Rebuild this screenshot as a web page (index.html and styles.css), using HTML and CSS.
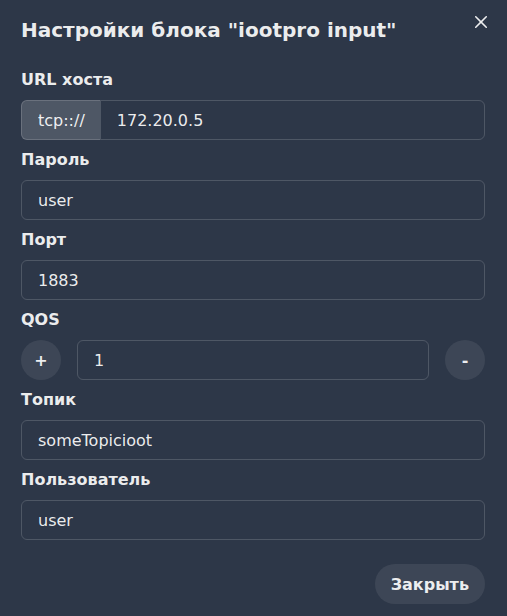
FILE: index.html
```html
<!DOCTYPE html>
<html lang="ru">

<head>
    <meta charset="UTF-8">
    <meta name="viewport" content="width=device-width, initial-scale=1.0">
    <title>Настройки блока</title>
    <link rel="stylesheet" href="styles.css">
</head>

<body>
    <section class="modal">
        <header class="modal-header">Настройки блока "iootpro input"</header>
        <button class="close" type="button" aria-label="Close">
            <svg viewBox="0 0 24 24" width="12" height="12">
                <path fill="currentColor" d="M.44 21.44a1.49 1.49 0 0 0 0 2.12 1.5 1.5 0 0 0 2.12 0l9.26-9.26a.25.25 0 0 1 .36 0l9.26 9.26a1.5 1.5 0 0 0 2.12 0 1.49 1.49 0 0 0 0-2.12l-9.26-9.26a.25.25 0 0 1 0-.36l9.26-9.26A1.5 1.5 0 0 0 21.44.44l-9.26 9.26a.25.25 0 0 1-.36 0L2.56.44A1.5 1.5 0 0 0 .44 2.56l9.26 9.26a.25.25 0 0 1 0 .36z"/>
            </svg>
        </button>

        <div class="modal-body">
            <div class="group">
                <label>URL хоста</label>
                <div class="input-group">
                    <span class="addon">tcp:://</span>
                    <input type="text" value="172.20.0.5">
                </div>
            </div>
            <div class="group">
                <label>Пароль</label>
                <input type="text" value="user">
            </div>
            <div class="group">
                <label>Порт</label>
                <input type="text" value="1883">
            </div>
            <div class="group">
                <label>QOS</label>
                <div class="stepper">
                    <button type="button" class="round">+</button>
                    <input type="text" value="1">
                    <button type="button" class="round">-</button>
                </div>
            </div>
            <div class="group">
                <label>Топик</label>
                <input type="text" value="someTopicioot">
            </div>
            <div class="group">
                <label>Пользователь</label>
                <input type="text" value="user">
            </div>
        </div>

        <footer class="modal-footer">
            <button type="button" class="btn">Закрыть</button>
        </footer>
    </section>
</body>

</html>
```

FILE: styles.css
```css
* {
    box-sizing: border-box;
}

html,
body {
    margin: 0;
    padding: 0;
    height: 100%;
    overflow: hidden;
}

body {
    background-color: #2d3748;
    color: rgba(255, 255, 255, 0.92);
    font-family: "DejaVu Sans", sans-serif;
    font-size: 16px;
}

.modal {
    position: relative;
}

.modal-header {
    padding: 16px 21px;
    font-size: 20px;
    line-height: 28px;
    font-weight: 700;
}

/* Exit key */
.close {
    position: absolute;
    top: 6px;
    right: 10px;
    width: 32px;
    height: 32px;
    display: flex;
    align-items: center;
    justify-content: center;
    border: 0;
    border-radius: 6px;
    background: transparent;
    color: rgba(255, 255, 255, 0.92);
    cursor: pointer;
}

.modal-body {
    padding: 8px 22px 8px 21px;
}

.group + .group {
    margin-top: 8px;
}

label {
    display: block;
    margin-bottom: 8px;
    line-height: 24px;
    font-weight: 700;
}

input {
    width: 100%;
    height: 40px;
    padding: 0 16px;
    border: 1px solid rgba(255, 255, 255, 0.16);
    border-radius: 6px;
    background: transparent;
    color: rgba(255, 255, 255, 0.92);
    font-family: inherit;
    font-size: 16px;
    outline: none;
}

/* Input with tcp prefix */
.input-group {
    display: flex;
}

.addon {
    display: flex;
    align-items: center;
    height: 40px;
    padding: 0 15px 0 16px;
    background-color: rgba(255, 255, 255, 0.16);
    border: 1px solid rgba(255, 255, 255, 0.16);
    border-right: 0;
    border-radius: 6px 0 0 6px;
}

.input-group input {
    flex: 1;
    border-radius: 0 6px 6px 0;
}

/* QOS + / - */
.stepper {
    display: flex;
    align-items: center;
    gap: 16px;
}

.stepper input {
    flex: 1;
}

button {
    font-family: inherit;
    color: rgba(255, 255, 255, 0.92);
    cursor: pointer;
}

.round,
.btn {
    height: 40px;
    border: 0;
    border-radius: 9999px;
    background-color: rgba(255, 255, 255, 0.08);
    font-size: 16px;
    font-weight: 700;
}

.round {
    width: 40px;
    flex: none;
    padding: 0;
}

.modal-footer {
    display: flex;
    justify-content: flex-end;
    padding: 16px 22px 16px 21px;
}

.btn {
    padding: 0 16px;
}
```
